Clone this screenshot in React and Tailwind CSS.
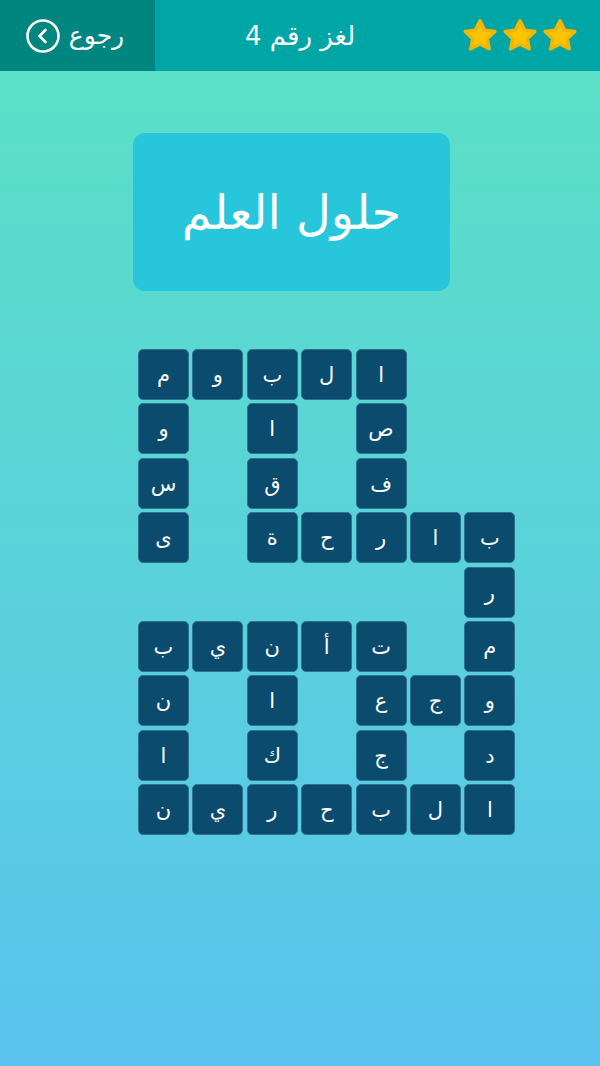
import React from "react";

const rows = [
  ["م", "و", "ب", "ل", "ا", "", ""],
  ["و", "", "ا", "", "ص", "", ""],
  ["س", "", "ق", "", "ف", "", ""],
  ["ى", "", "ة", "ح", "ر", "ا", "ب"],
  ["", "", "", "", "", "", "ر"],
  ["ب", "ي", "ن", "أ", "ت", "", "م"],
  ["ن", "", "ا", "", "ع", "ج", "و"],
  ["ا", "", "ك", "", "ج", "", "د"],
  ["ن", "ي", "ر", "ح", "ب", "ل", "ا"],
];

function Star() {
  return (
    <svg width="38" height="38" viewBox="0 0 24 24">
      <polygon
        points="12,2.4 14.9,8.3 21.4,9.2 16.6,13.7 17.8,20.1 12,17 6.2,20.1 7.4,13.7 2.6,9.2 9.1,8.3"
        fill="#ffc400"
        stroke="#f2b600"
        strokeWidth="2.2"
        strokeLinejoin="round"
      />
    </svg>
  );
}

export default function App() {
  return (
    <div
      className="w-[600px] h-[1066px] overflow-hidden bg-gradient-to-b from-[#5be1c3] via-[#5ad3d9] to-[#5ac3ee]"
      style={{ fontFamily: '"DejaVu Sans", sans-serif' }}
    >
      {/* Top bar */}
      <div className="flex h-[71px] bg-[#00a5a5] text-white">
        <div className="w-[155px] bg-[#00867f] flex items-center justify-center gap-[8px] pr-[6px]">
          <svg width="36" height="36" viewBox="0 0 36 36" fill="none" stroke="white" strokeWidth="2.6" strokeLinecap="round" strokeLinejoin="round">
            <circle cx="18" cy="18" r="15.5" />
            <path d="M20.5 12 L14.5 18 L20.5 24" />
          </svg>
          <span dir="rtl" className="text-[25px] leading-none">رجوع</span>
        </div>
        <div className="flex-1 flex items-center justify-center">
          <span dir="rtl" className="text-[26px] leading-none">لغز رقم 4</span>
        </div>
        <div className="w-[155px] flex items-center justify-center gap-[2px] pr-[6px]">
          <Star />
          <Star />
          <Star />
        </div>
      </div>

      {/* Clue card */}
      <div className="ml-[133px] mt-[62px] w-[317px] h-[158px] rounded-[12px] bg-[#27c6db] flex items-center justify-center">
        <span dir="rtl" className="text-white text-[48px] leading-none">حلول العلم</span>
      </div>

      {/* Letter grid */}
      <div className="ml-[138px] mt-[58px] grid grid-cols-[repeat(7,51px)] auto-rows-[51px] gap-[3.4px]">
        {rows.flatMap((row, r) =>
          row.map((ch, c) =>
            ch ? (
              <div
                key={`${r}-${c}`}
                className="rounded-[5px] bg-[#0b4b6d] border border-[#2d7390] flex items-center justify-center text-white text-[21px] leading-none pt-[2px]"
              >
                {ch}
              </div>
            ) : (
              <div key={`${r}-${c}`} />
            )
          )
        )}
      </div>
    </div>
  );
}
